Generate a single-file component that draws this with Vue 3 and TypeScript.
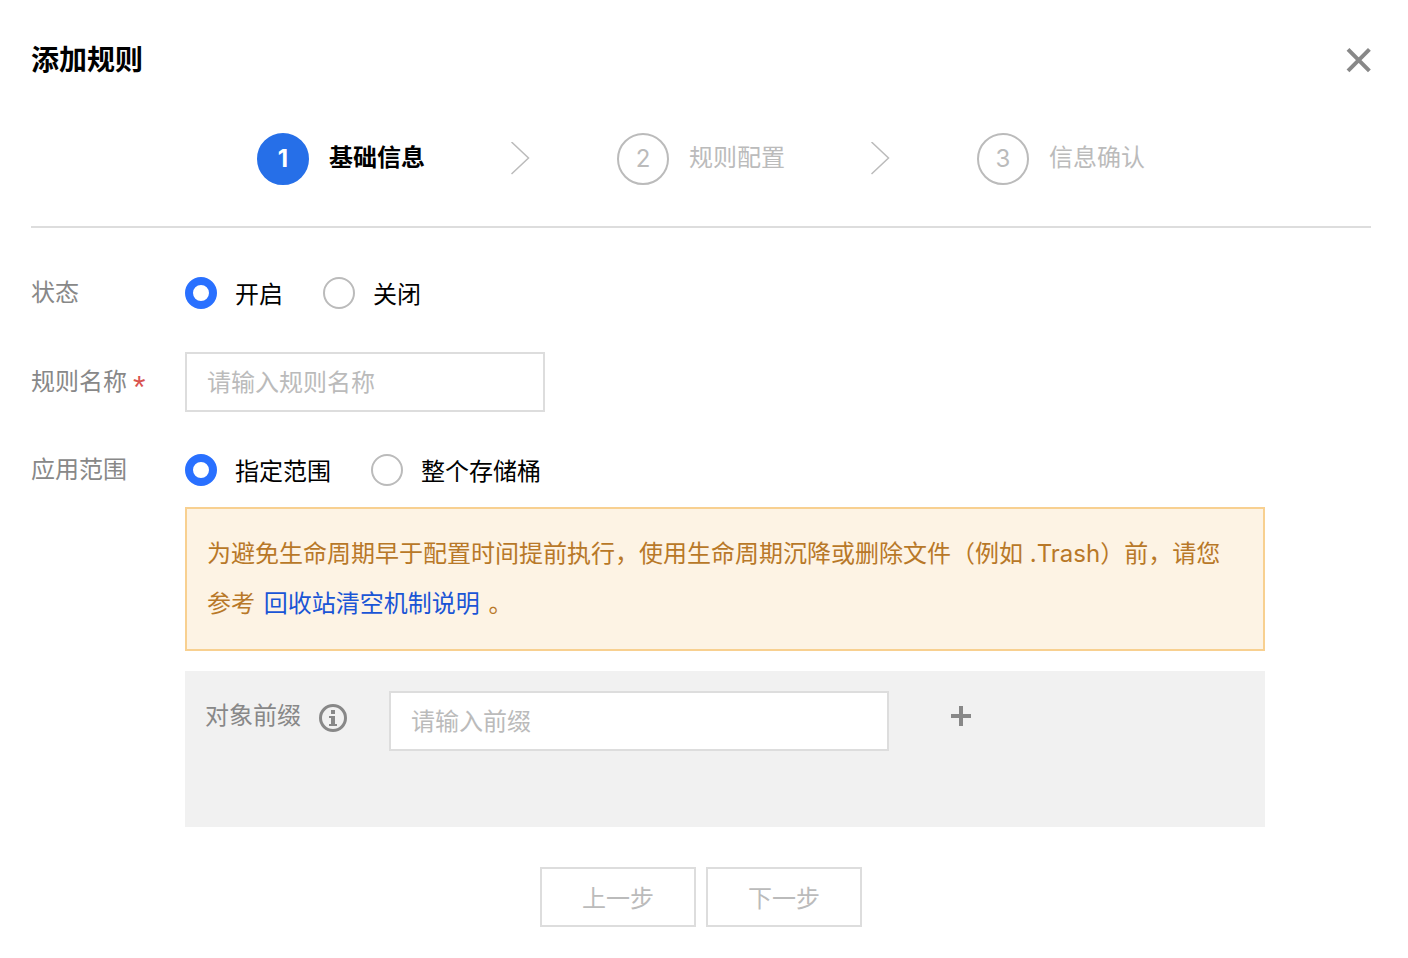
<script setup lang="ts">
import { ref } from 'vue'

const steps: string[] = ['基础信息', '规则配置', '信息确认']
const current = ref(0)
const status = ref('on')
const scope = ref('prefix')
const ruleName = ref('')
const prefix = ref('')
</script>

<template>
  <main class="dialog">
    <header class="head">
      <h1>添加规则</h1>
      <button class="icon-btn" type="button" aria-label="关闭">
        <svg width="26" height="26" viewBox="0 0 26 26" fill="none" stroke="#888" stroke-width="4">
          <path d="M3 2.4 24.4 23.8M24.4 2.4 3 23.8" />
        </svg>
      </button>
    </header>

    <ol class="steps">
      <template v-for="(name, i) in steps" :key="name">
        <li v-if="i > 0" class="chevron" aria-hidden="true">
          <svg width="20" height="34" viewBox="0 0 20 34" fill="none" stroke="#bbb" stroke-width="1.5">
            <path d="M.5 0 17.5 16 .5 32" />
          </svg>
        </li>
        <li class="step" :class="{ active: i === current }">
          <span class="num">{{ i + 1 }}</span>
          <span class="name">{{ name }}</span>
        </li>
      </template>
    </ol>

    <form class="form" @submit.prevent>
      <div class="row" role="radiogroup" aria-labelledby="status-label">
        <span id="status-label" class="label">状态</span>
        <div class="radios">
          <label class="radio"><input v-model="status" type="radio" name="status" value="on" /><span>开启</span></label>
          <label class="radio"><input v-model="status" type="radio" name="status" value="off" /><span>关闭</span></label>
        </div>
      </div>

      <div class="row">
        <label class="label" for="rule-name">规则名称<span class="required">*</span></label>
        <input id="rule-name" v-model="ruleName" class="text name-input" type="text" placeholder="请输入规则名称" />
      </div>

      <div class="row scope-row" role="radiogroup" aria-labelledby="scope-label">
        <span id="scope-label" class="label">应用范围</span>
        <div class="radios">
          <label class="radio"><input v-model="scope" type="radio" name="scope" value="prefix" /><span>指定范围</span></label>
          <label class="radio"><input v-model="scope" type="radio" name="scope" value="bucket" /><span>整个存储桶</span></label>
        </div>
      </div>

      <div class="details">
        <p class="alert">为避免生命周期早于配置时间提前执行，使用生命周期沉降或删除文件（例如 .Trash）前，请您参考 <a href="#">回收站清空机制说明</a> 。</p>
        <div class="panel">
          <div class="prefix-label">
            <label for="prefix">对象前缀</label>
            <svg width="28" height="28" viewBox="0 0 28 28">
              <circle cx="14" cy="14" r="12.5" fill="none" stroke="#888" stroke-width="3" />
              <path d="M12 6h4v4h-4zM10 12h6v8h2v2h-8v-2h2v-6h-2z" fill="#888" />
            </svg>
          </div>
          <input id="prefix" v-model="prefix" class="text prefix-input" type="text" placeholder="请输入前缀" />
          <button class="icon-btn add" type="button" aria-label="添加">
            <svg width="20" height="20" viewBox="0 0 20 20" fill="#888">
              <path d="M8 0h4v8h8v4h-8v8H8v-8H0V8h8z" />
            </svg>
          </button>
        </div>
      </div>

      <footer class="actions">
        <button type="button">上一步</button>
        <button type="button">下一步</button>
      </footer>
    </form>
  </main>
</template>

<style>
body {
  margin: 0;
  background: #fff;
}
</style>

<style scoped>
.dialog {
  box-sizing: border-box;
  padding: 36px 37px 31px 31px;
  font: 24px/36px Inter, "Noto Sans CJK SC", sans-serif;
  color: #000;
}
.head {
  display: flex;
  align-items: center;
  justify-content: space-between;
  height: 48px;
}
h1 {
  margin: 0;
  font-size: 28px;
  font-weight: 700;
  line-height: 50px;
}
.icon-btn {
  display: flex;
  padding: 0;
  border: 0;
  background: none;
  cursor: pointer;
}
.steps {
  display: flex;
  align-items: center;
  justify-content: center;
  margin: 0;
  padding: 49px 0 41px;
  list-style: none;
  border-bottom: 2px solid #ddd;
}
.step {
  display: flex;
  align-items: center;
  gap: 20px;
  color: #bbb;
}
.num {
  box-sizing: border-box;
  width: 52px;
  height: 52px;
  border: 2px solid #bbb;
  border-radius: 50%;
  line-height: 48px;
  text-align: center;
}
.name {
  padding-bottom: 2px;
}
.active {
  color: #000;
  font-weight: 700;
}
.active .num {
  border-color: #266fe8;
  background: #266fe8;
  color: #fff;
}
.chevron {
  display: flex;
  margin: 0 86px;
}
.form {
  padding-top: 35px;
}
.row {
  display: flex;
  align-items: center;
  min-height: 60px;
  margin-bottom: 29px;
}
.scope-row {
  min-height: 58px;
  margin-bottom: 8px;
}
.label {
  flex: none;
  width: 154px;
  color: #888;
}
.required {
  margin-left: 6px;
  font-family: "Liberation Sans", sans-serif;
  font-size: 32px;
  line-height: 24px;
  vertical-align: -8px;
  color: #d9534f;
}
.radios {
  display: flex;
  gap: 40px;
}
.radio {
  display: flex;
  align-items: center;
  gap: 18px;
}
.radio span {
  padding-top: 3px;
}
.radio input {
  appearance: none;
  box-sizing: border-box;
  width: 32px;
  height: 32px;
  margin: 0;
  border: 2px solid #bbb;
  border-radius: 50%;
  background: #fff;
}
.radio input:checked {
  border: 8px solid #2970ff;
}
.text {
  box-sizing: border-box;
  height: 60px;
  padding: 0 20px;
  border: 2px solid #ddd;
  border-radius: 0;
  background: #fff;
  font: inherit;
  color: #000;
}
.text::placeholder {
  color: #bbb;
  opacity: 1;
}
.name-input {
  width: 360px;
}
.details {
  max-width: 1080px;
  margin: 0 0 40px 154px;
}
.alert {
  margin: 0 0 20px;
  padding: 20px;
  border: 2px solid #f8d090;
  background: #fdf3e4;
  color: #b87828;
  line-height: 50px;
}
.alert a {
  margin: 0 2px;
  color: #1a55d6;
  text-decoration: none;
}
.panel {
  display: flex;
  align-items: flex-start;
  box-sizing: border-box;
  min-height: 156px;
  padding: 20px;
  background: #f1f1f1;
}
.prefix-label {
  display: flex;
  align-items: center;
  gap: 18px;
  width: 184px;
  height: 54px;
  color: #888;
}
.prefix-label label {
  padding-bottom: 4px;
}
.prefix-input {
  flex: 0 1 500px;
}
.add {
  margin: 15px 0 0 62px;
}
.actions {
  display: flex;
  justify-content: center;
  gap: 10px;
}
.actions button {
  box-sizing: border-box;
  width: 156px;
  height: 60px;
  padding: 3px 0 0;
  border: 2px solid #ddd;
  background: #fff;
  font: inherit;
  color: #bbb;
}
</style>
